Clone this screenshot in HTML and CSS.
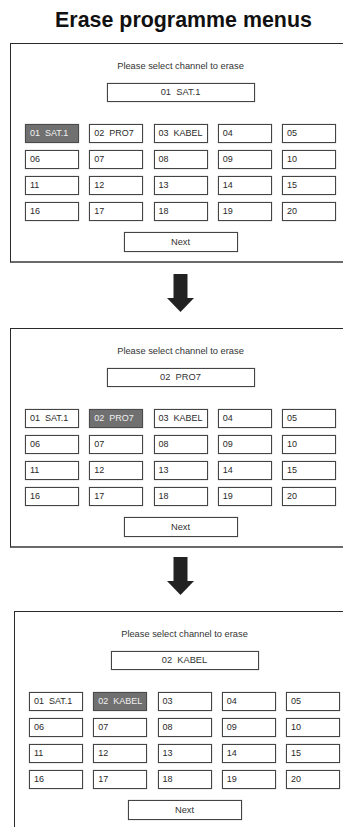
FILE: index.html
```html
<!DOCTYPE html>
<html lang="en">
<head>
<meta charset="utf-8">
<title>Erase programme menus</title>
<link rel="stylesheet" href="styles.css">
</head>
<body>
<main class="page">
  <h1 class="title">Erase programme menus</h1>

  <section class="panel">
    <p class="prompt">Please select channel to erase</p>
    <div class="display">01  SAT.1</div>
    <div class="grid">
      <div class="cell selected">01  SAT.1</div>
      <div class="cell">02  PRO7</div>
      <div class="cell">03  KABEL</div>
      <div class="cell">04</div>
      <div class="cell">05</div>
      <div class="cell">06</div>
      <div class="cell">07</div>
      <div class="cell">08</div>
      <div class="cell">09</div>
      <div class="cell">10</div>
      <div class="cell">11</div>
      <div class="cell">12</div>
      <div class="cell">13</div>
      <div class="cell">14</div>
      <div class="cell">15</div>
      <div class="cell">16</div>
      <div class="cell">17</div>
      <div class="cell">18</div>
      <div class="cell">19</div>
      <div class="cell">20</div>
    </div>
    <div class="next">Next</div>
  </section>

  <div class="arrow arrow-first">
    <svg width="27" height="38" viewBox="0 0 27 38"><rect x="6.5" y="0" width="14" height="25" fill="#222"/><polygon points="0,24 27,24 13.5,38" fill="#222"/></svg>
  </div>

  <section class="panel">
    <p class="prompt">Please select channel to erase</p>
    <div class="display">02  PRO7</div>
    <div class="grid">
      <div class="cell">01  SAT.1</div>
      <div class="cell selected">02  PRO7</div>
      <div class="cell">03  KABEL</div>
      <div class="cell">04</div>
      <div class="cell">05</div>
      <div class="cell">06</div>
      <div class="cell">07</div>
      <div class="cell">08</div>
      <div class="cell">09</div>
      <div class="cell">10</div>
      <div class="cell">11</div>
      <div class="cell">12</div>
      <div class="cell">13</div>
      <div class="cell">14</div>
      <div class="cell">15</div>
      <div class="cell">16</div>
      <div class="cell">17</div>
      <div class="cell">18</div>
      <div class="cell">19</div>
      <div class="cell">20</div>
    </div>
    <div class="next">Next</div>
  </section>

  <div class="arrow arrow-second">
    <svg width="27" height="38" viewBox="0 0 27 38"><rect x="6.5" y="0" width="14" height="25" fill="#222"/><polygon points="0,24 27,24 13.5,38" fill="#222"/></svg>
  </div>

  <section class="panel panel-shifted">
    <p class="prompt">Please select channel to erase</p>
    <div class="display">02  KABEL</div>
    <div class="grid">
      <div class="cell">01  SAT.1</div>
      <div class="cell selected">02  KABEL</div>
      <div class="cell">03</div>
      <div class="cell">04</div>
      <div class="cell">05</div>
      <div class="cell">06</div>
      <div class="cell">07</div>
      <div class="cell">08</div>
      <div class="cell">09</div>
      <div class="cell">10</div>
      <div class="cell">11</div>
      <div class="cell">12</div>
      <div class="cell">13</div>
      <div class="cell">14</div>
      <div class="cell">15</div>
      <div class="cell">16</div>
      <div class="cell">17</div>
      <div class="cell">18</div>
      <div class="cell">19</div>
      <div class="cell">20</div>
    </div>
    <div class="next">Next</div>
  </section>
</main>
</body>
</html>
```

FILE: styles.css
```css
html, body {
  margin: 0;
  padding: 0;
  overflow: hidden;
  background: #ffffff;
}

body {
  font-family: "Liberation Sans", Arial, Helvetica, sans-serif;
  color: #222;
}

.page {
  width: 341px;
  padding: 8px 0 0 10px;
  display: flex;
  flex-direction: column;
}

.title {
  margin: 0 0 11px 0;
  padding-left: 6px;
  font-size: 21.4px;
  line-height: 24px;
  font-weight: bold;
  text-align: center;
  color: #111;
}

.panel {
  box-sizing: border-box;
  width: 341px;
  height: 220px;
  border: 1px solid #2a2a2a;
  border-bottom: 2px solid #6a6a6a;
  padding-top: 17px;
  display: flex;
  flex-direction: column;
  align-items: center;
  flex-shrink: 0;
}

.panel-shifted {
  margin-left: 4px;
}

.prompt {
  margin: 0;
  font-size: 9.3px;
  line-height: 11px;
  color: #333;
}

.display {
  box-sizing: border-box;
  margin-top: 11px;
  width: 148px;
  height: 19px;
  border: 1px solid #444;
  box-shadow: 0 0 1px rgba(0, 0, 0, 0.45);
  font-size: 9.3px;
  line-height: 17px;
  text-align: center;
  white-space: pre;
  color: #333;
}

.grid {
  margin-top: 22px;
  width: 311px;
  display: grid;
  grid-template-columns: repeat(5, 54px);
  column-gap: 10.25px;
  row-gap: 7px;
}

.cell {
  box-sizing: border-box;
  height: 19px;
  border: 1px solid #444;
  box-shadow: 0 0 1px rgba(0, 0, 0, 0.45);
  padding-left: 4px;
  font-size: 9px;
  line-height: 17px;
  white-space: pre;
  color: #2a2a2a;
  background: #fff;
}

.cell.selected {
  background: #707070;
  border-color: #4a4a4a;
  color: #f0f0f0;
}

.next {
  box-sizing: border-box;
  margin-top: 11px;
  width: 114px;
  height: 20px;
  border: 1px solid #444;
  box-shadow: 0 0 1px rgba(0, 0, 0, 0.45);
  font-size: 9.3px;
  line-height: 18px;
  text-align: center;
  color: #333;
}

.arrow {
  display: flex;
  justify-content: center;
  height: 38px;
  margin-bottom: 16px;
  flex-shrink: 0;
}

.arrow-first {
  margin-top: 11px;
}

.arrow-second {
  margin-top: 9px;
}

.arrow svg {
  display: block;
}
```
